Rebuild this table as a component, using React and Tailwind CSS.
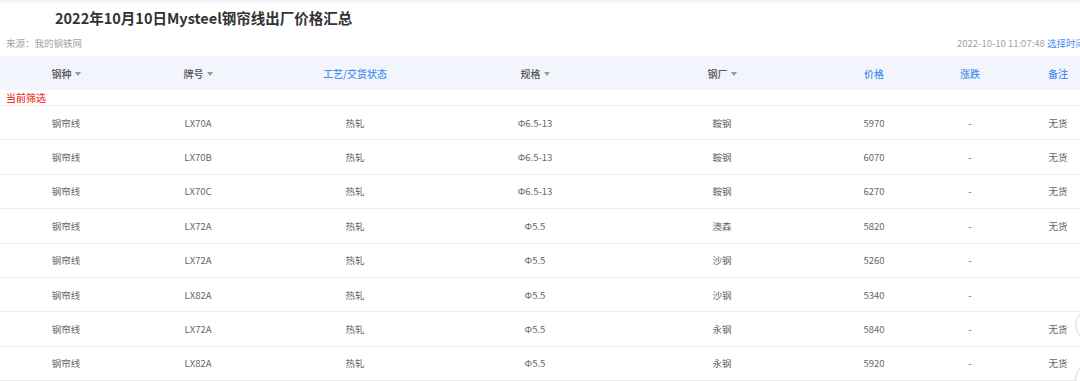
import { ChevronDown } from 'lucide-react';

const cols = [
  { label: '钢种', w: 'w-[132px]', sort: true },
  { label: '牌号', w: 'w-[132px]', sort: true },
  { label: '工艺/交货状态', w: 'w-[182px]' },
  { label: '规格', w: 'w-[178px]', sort: true },
  { label: '钢厂', w: 'w-[196px]', sort: true },
  { label: '价格', w: 'w-[108px]' },
  { label: '涨跌', w: 'w-[84px]' },
  { label: '备注', w: 'w-[92px]' },
];

const rows = [
  ['钢帘线', 'LX70A', '热轧', 'Φ6.5-13', '鞍钢', '5970', '-', '无货'],
  ['钢帘线', 'LX70B', '热轧', 'Φ6.5-13', '鞍钢', '6070', '-', '无货'],
  ['钢帘线', 'LX70C', '热轧', 'Φ6.5-13', '鞍钢', '6270', '-', '无货'],
  ['钢帘线', 'LX72A', '热轧', 'Φ5.5', '澳森', '5820', '-', '无货'],
  ['钢帘线', 'LX72A', '热轧', 'Φ5.5', '沙钢', '5260', '-', ''],
  ['钢帘线', 'LX82A', '热轧', 'Φ5.5', '沙钢', '5340', '-', ''],
  ['钢帘线', 'LX72A', '热轧', 'Φ5.5', '永钢', '5840', '-', '无货'],
  ['钢帘线', 'LX82A', '热轧', 'Φ5.5', '永钢', '5920', '-', '无货'],
];

function SortArrow() {
  return <span className="ml-[3px] inline-block w-0 h-0 border-l-[3.5px] border-r-[3.5px] border-t-[4px] border-l-transparent border-r-transparent border-t-[#9a9a9a] translate-y-[1px]" />;
}

export default function App() {
  return (
    <div className="relative w-[1080px] h-[381px] overflow-hidden bg-white font-['Noto_Sans_CJK_SC','Noto_Sans',sans-serif]">
      <div className="h-[3px] bg-[#f1f4f9]" />
      <h1 className="pl-[55px] pt-[5px] h-[30px] text-[14.5px] leading-[20px] font-bold text-[#333]">
        2022年10月10日Mysteel钢帘线出厂价格汇总
      </h1>
      <div className="flex items-center justify-between h-[20px] pl-[6px] text-[9.5px] text-[#a3a3a3] whitespace-nowrap">
        <span>来源：我的钢铁网</span>
        <span className="-mr-[5px]">
          2022-10-10 11:07:48 <span className="text-[#4a8cf0]">选择时间</span>
        </span>
      </div>
      <div className="mt-[3px] flex h-[34px] items-center bg-[#f2f6fc] text-[10px] font-medium whitespace-nowrap">
        {cols.map((c) => (
          <div key={c.label} className={`${c.w} shrink-0 flex items-center justify-center ${c.sort ? 'text-[#555]' : 'text-[#4a8cf0]'}`}>
            {c.label}
            {c.sort && <SortArrow />}
          </div>
        ))}
      </div>
      <div className="h-[16px] pl-[6px] pt-[1px] text-[10px] leading-[14px] font-medium text-[#f03a2e] border-b border-[#ececec]">
        当前筛选
      </div>
      {rows.map((r, i) => (
        <div key={i} className="flex h-[34.4px] items-center border-b border-[#ececec] text-[9.5px] text-[#666] whitespace-nowrap">
          {r.map((v, j) => (
            <div key={j} className={`${cols[j].w} shrink-0 text-center`}>{v}</div>
          ))}
        </div>
      ))}
      <div className="absolute left-[1075px] top-[310px] w-[30px] h-[30px] rounded-full bg-white border border-[#d6d6d6]" />
      <div className="absolute left-[1075px] top-[364px] w-[30px] h-[30px] rounded-full bg-white border border-[#d6d6d6]" />
    </div>
  );
}
